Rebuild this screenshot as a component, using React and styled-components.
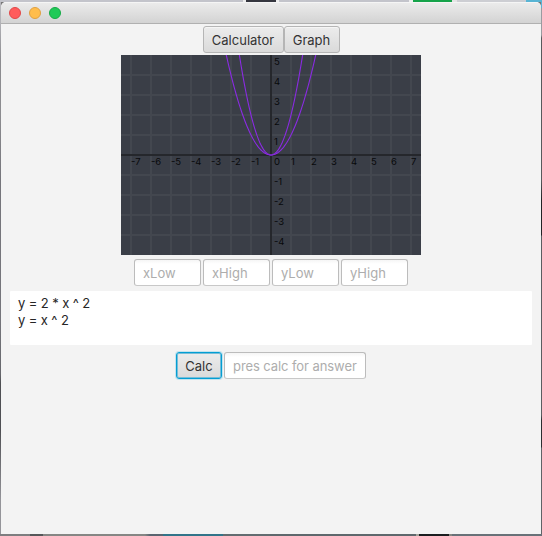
import React from "react";
import styled, { createGlobalStyle } from "styled-components";

const GlobalStyle = createGlobalStyle`
  * { box-sizing: border-box; }
  html, body { margin: 0; }
  body { font-family: Inter, "Liberation Sans", sans-serif; font-size: 13px; overflow: hidden; }
`;

const Desktop = styled.div`
  width: 542px;
  height: 536px;
  padding: 2px 1px;
  background:
    linear-gradient(90deg, #c3c4cb 0 243px, #eeeeee 243px 246px, #35363f 246px 276px, #eeeeee 276px 279px, #c3c4cb 279px 409px, #eeeeee 409px 413px, #16a34a 413px 452px, #e4e4e4 452px 457px, #cdced3 457px 526px, #58b4d4 526px) 0 0 / 542px 2px no-repeat,
    linear-gradient(90deg, #7d7e80 0 30px, #555759 30px 43px, #858684 43px 145px, #596570 150px 163px, #317489 163px 223px, #626c70 223px 270px, #5e686c 270px 416px, #a4a49d 416px 419px, #1b1e20 419px 449px, #858580 449px 452px, #687178 452px) 0 534px / 542px 2px no-repeat,
    linear-gradient(#b5b5ba 0 20px, #8c8c90 60px 115px, #75757b 180px 320px, #66676c 374px, #4e4f53 383px 430px, #949499 500px) 0 0 / 1px 536px no-repeat,
    linear-gradient(#58b4d4 0 8px, #999ba0 8px 35px, #58595c 38px 180px, #222326 200px 235px, #5b5d61 236px 415px, #2c2d31 420px 447px, #606267 448px) 541px 0 / 1px 536px no-repeat,
    #777;
`;

const Window = styled.main`
  height: 532px;
  overflow: hidden;
  border-radius: 5px 5px 0 0;
  background: #f3f3f3;
`;

const TitleBar = styled.header`
  display: flex;
  align-items: center;
  gap: 8px;
  height: 22px;
  padding: 0 8px;
  border-bottom: 1px solid #b0b0b0;
  border-top: 1px solid #f5f5f5;
  background: linear-gradient(#ebebeb, #d3d3d3);
`;

const WindowControl = styled.span`
  width: 12px;
  height: 12px;
  border-radius: 50%;
  border: 1px solid ${({ $edge }) => $edge};
  background: ${({ $fill }) => $fill};
`;

const Content = styled.div`
  display: flex;
  flex-direction: column;
  align-items: center;
`;

const Toolbar = styled.nav`
  display: flex;
  margin-top: 2px;
`;

const Button = styled.button`
  width: ${({ $width }) => $width}px;
  height: 27px;
  padding: 0;
  font: inherit;
  color: #333;
  border: 1px solid ${({ $focused }) => ($focused ? "#039ed3" : "#b5b5b5")};
  border-radius: 3px;
  background: linear-gradient(#ececec, #dadada);
  box-shadow: ${({ $focused }) =>
    $focused
      ? "0 0 0 1px #c3e3ee, inset 0 0 0 1px #77bdd8"
      : "inset 0 1px #f5f5f5"};
  outline: none;
`;

const Graph = styled.svg`
  display: block;
  width: 300px;
  height: 200px;
  margin-top: 2px;
  background: #3a3e47;
  font: 9.5px Inter, "Liberation Sans", sans-serif;
`;

const FieldRow = styled.div`
  display: flex;
  gap: 2px;
  margin-top: ${({ $top }) => $top}px;
`;

const Field = styled.input`
  width: ${({ $width }) => $width}px;
  height: 27px;
  padding: 0 ${({ $width }) => ($width > 100 ? 6 : 8)}px 0 8px;
  font: inherit;
  letter-spacing: ${({ $tracking = 0 }) => $tracking}px;
  color: #333;
  border: 1px solid #bcbcbc;
  border-bottom-color: #c8c8c8;
  border-radius: 3px;
  background: linear-gradient(#f5f5f5, #fff 4px);
  outline: none;
  &::placeholder { color: #adadad; opacity: 1; }
`;

const EquationList = styled.div`
  align-self: stretch;
  height: 54px;
  margin: 5px 9px 0;
  padding: 4px 8px;
  border-radius: 1px;
  background: #fff;
  color: #262626;
  line-height: 17px;
  letter-spacing: -0.1px;
  white-space: pre;
`;

const CENTER_X = 150;
const CENTER_Y = 100;
const UNIT = 20;
const columns = [-7, -6, -5, -4, -3, -2, -1, 0, 1, 2, 3, 4, 5, 6, 7];
const rows = [5, 4, 3, 2, 1, -1, -2, -3, -4];

function parabola(scale) {
  const points = [];
  for (let x = -2.5; x <= 2.501; x += 0.05) {
    points.push(`${(CENTER_X + x * UNIT).toFixed(2)},${(CENTER_Y - scale * x * x * UNIT).toFixed(2)}`);
  }
  return points.join(" ");
}

function Plot() {
  return (
    <Graph viewBox="0 0 300 200">
      <g stroke="#43474f" strokeWidth="2">
        {columns.map((n) => (
          <path key={n} d={`M${CENTER_X + n * UNIT} 0V200`} />
        ))}
        {rows.filter((n) => n !== 5).map((n) => (
          <path key={n} d={`M0 ${CENTER_Y - n * UNIT}H300`} />
        ))}
      </g>
      <path d="M150 0V200M0 100H300" stroke="#25272c" strokeWidth="2" />
      <g fill="#08090b">
        {columns.map((n) => (
          <text key={n} x={CENTER_X + n * UNIT + (n === 0 ? 3 : 0)} y="110">{n}</text>
        ))}
        {rows.map((n) => (
          <text key={n} x="153" y={CENTER_Y - n * UNIT + 10}>{n}</text>
        ))}
      </g>
      <g fill="none" stroke="#8a2be2" strokeWidth="1.1">
        <polyline points={parabola(1)} />
        <polyline points={parabola(2)} />
      </g>
    </Graph>
  );
}

export default function App() {
  return (
    <>
      <GlobalStyle />
      <Desktop>
        <Window>
          <TitleBar>
            <WindowControl $fill="#ff5c5c" $edge="#e04848" />
            <WindowControl $fill="#ffbd4c" $edge="#dfa042" />
            <WindowControl $fill="#20ca58" $edge="#16aa46" />
          </TitleBar>
          <Content>
            <Toolbar>
              <Button $width={81}>Calculator</Button>
              <Button $width={56}>Graph</Button>
            </Toolbar>
            <Plot />
            <FieldRow $top={4}>
              <Field $width={67} placeholder="xLow" />
              <Field $width={67} placeholder="xHigh" />
              <Field $width={67} placeholder="yLow" />
              <Field $width={67} placeholder="yHigh" />
            </FieldRow>
            <EquationList>{"y = 2 * x ^ 2\ny = x ^ 2"}</EquationList>
            <FieldRow $top={7}>
              <Button $width={46} $focused>Calc</Button>
              <Field $width={142} $tracking={-0.08} placeholder="pres calc for answer" />
            </FieldRow>
          </Content>
        </Window>
      </Desktop>
    </>
  );
}
